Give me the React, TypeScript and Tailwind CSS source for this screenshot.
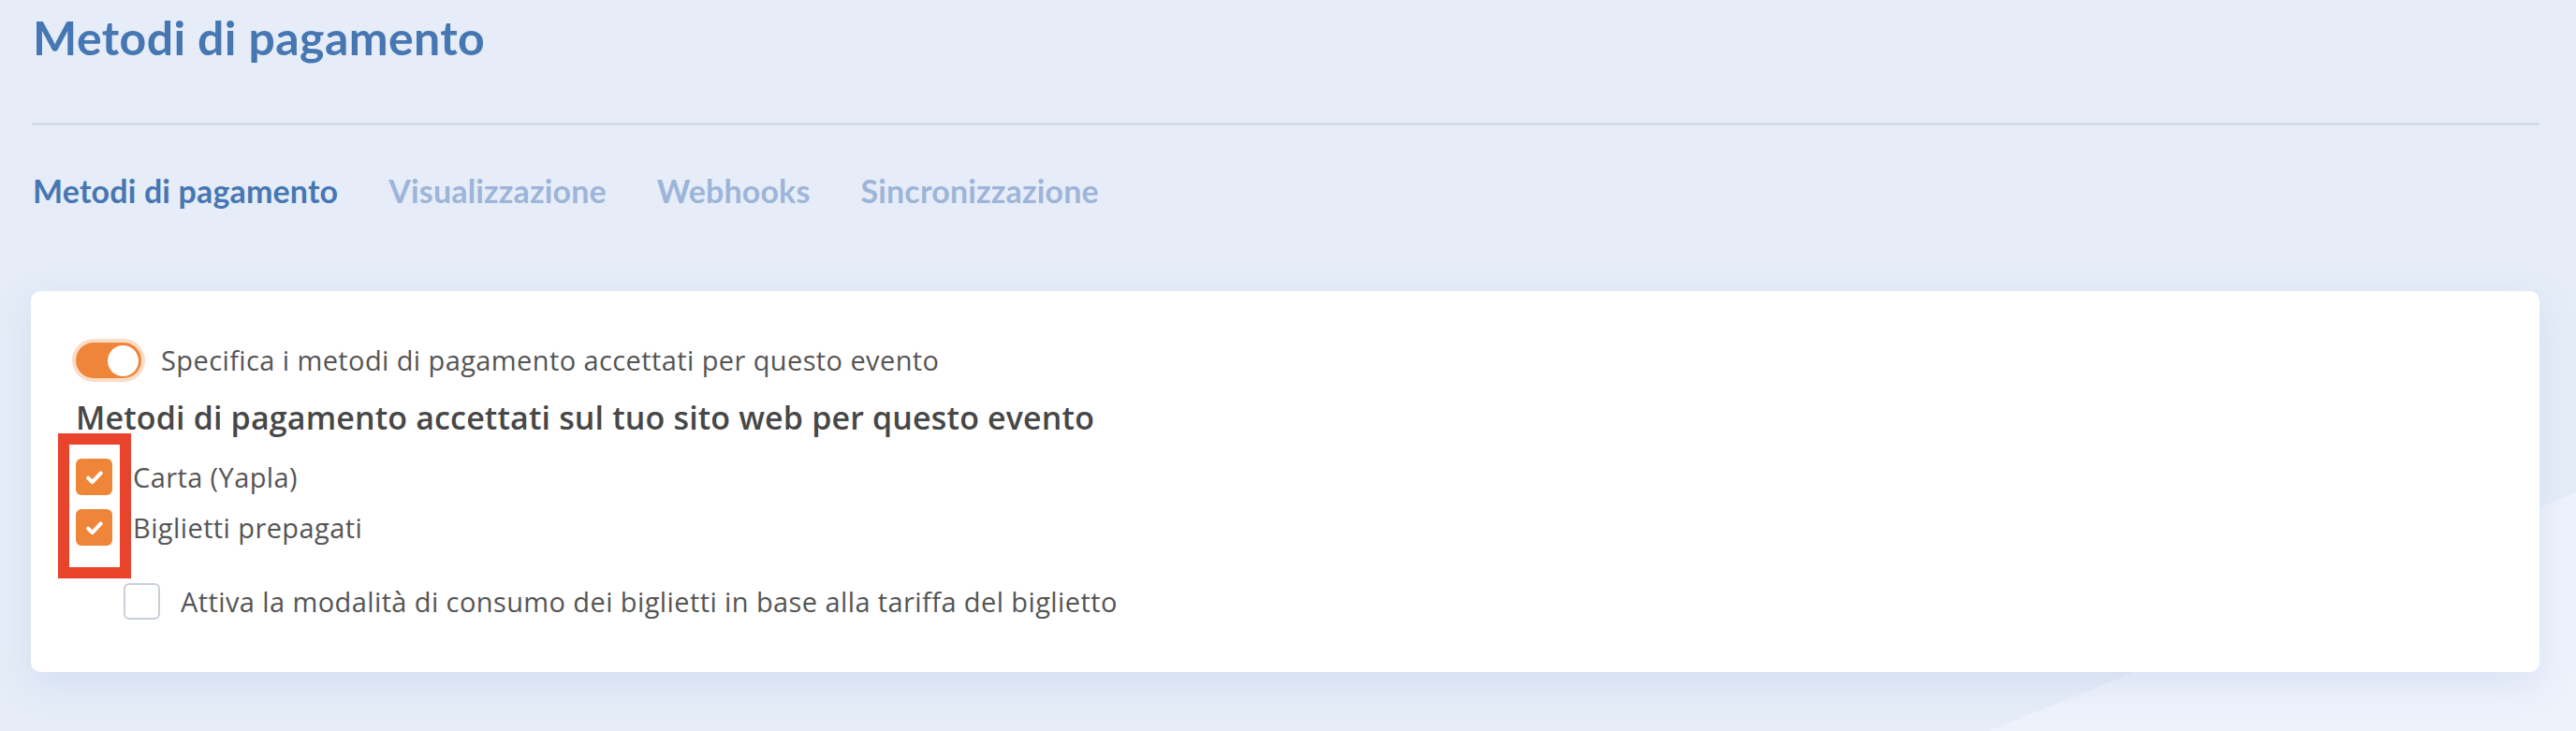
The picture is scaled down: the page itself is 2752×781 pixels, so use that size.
import React from "react";

function Check() {
  return (
    <svg width="24" height="24" viewBox="0 0 20 20" fill="none">
      <path d="M4.4 10.6l3.6 3.6L15.6 6.2" stroke="#ffffff" strokeWidth="3.4" strokeLinecap="round" strokeLinejoin="round" />
    </svg>
  );
}

function CheckedBox() {
  return (
    <div className="flex h-[39px] w-[39px] shrink-0 items-center justify-center rounded-[6px] bg-[#ee8538]">
      <Check />
    </div>
  );
}

const body = { fontFamily: "'Open Sans', 'Noto Sans', sans-serif" };

export default function App() {
  return (
    <div
      className="relative min-h-[781px] w-full overflow-hidden bg-[#e6edf8]"
      style={{ fontFamily: "Lato, 'Noto Sans', sans-serif" }}
    >
      <svg className="absolute inset-0 h-full w-full" viewBox="0 0 2752 781" preserveAspectRatio="none">
        <polygon points="2125,781 2752,526 2752,781" fill="#eef2fb" />
      </svg>

      <div className="relative pl-[34px] pr-[39px] pt-[10px]">
        <h1 className="pl-[1px] text-[50px] font-bold leading-[60px] tracking-[0.4px] text-[#4777b2]">Metodi di pagamento</h1>

        <div className="mt-[61px] h-[3px] bg-[#d3dbe7]" />

        <nav className="mt-[50px] flex gap-[54px] pl-[1px] text-[34px] font-bold leading-[40px] tracking-[0.15px]">
          <span className="text-[#4777b2]">Metodi di pagamento</span>
          <span className="text-[#9db5d8]">Visualizzazione</span>
          <span className="text-[#9db5d8]">Webhooks</span>
          <span className="text-[#9db5d8]">Sincronizzazione</span>
        </nav>

        <section
          className="relative mt-[87px] -ml-[1px] rounded-[10px] bg-white pb-[56px] pl-[48px] pt-[55px] shadow-[0_12px_40px_rgba(120,150,210,0.18)]"
          style={body}
        >
          <div className="flex items-center gap-[21px]">
            <div className="flex h-[38px] w-[70px] items-center justify-end rounded-full bg-[#ee8538] pr-[3px] shadow-[0_0_0_4px_#fbdcc6]">
              <div className="h-[33px] w-[33px] rounded-full bg-white" />
            </div>
            <span className="text-[29px] leading-[38px] tracking-[0.4px] text-[#555555]">
              Specifica i metodi di pagamento accettati per questo evento
            </span>
          </div>

          <h2 className="mt-[20px] text-[34px] font-semibold leading-[44px] tracking-[0.15px] text-[#474747]">
            Metodi di pagamento accettati sul tuo sito web per questo evento
          </h2>

          <div className="mt-[22px] flex flex-col gap-[15px]">
            <label className="flex items-center gap-[22px]">
              <CheckedBox />
              <span className="text-[29px] leading-[39px] tracking-[0.4px] text-[#555555]">Carta (Yapla)</span>
            </label>
            <label className="flex items-center gap-[22px]">
              <CheckedBox />
              <span className="text-[29px] leading-[39px] tracking-[0.4px] text-[#555555]">Biglietti prepagati</span>
            </label>
          </div>

          <label className="ml-[51px] mt-[40px] flex items-center gap-[22px]">
            <div className="h-[39px] w-[39px] shrink-0 rounded-[6px] border-2 border-[#c9cfd8] bg-white" />
            <span className="text-[29px] leading-[39px] tracking-[0.4px] text-[#555555]">
              Attiva la modalità di consumo dei biglietti in base alla tariffa del biglietto
            </span>
          </label>

          <div className="absolute left-[29px] top-[152px] h-[155px] w-[78px] border-[12px] border-[#e8432b]" />
        </section>
      </div>
    </div>
  );
}
